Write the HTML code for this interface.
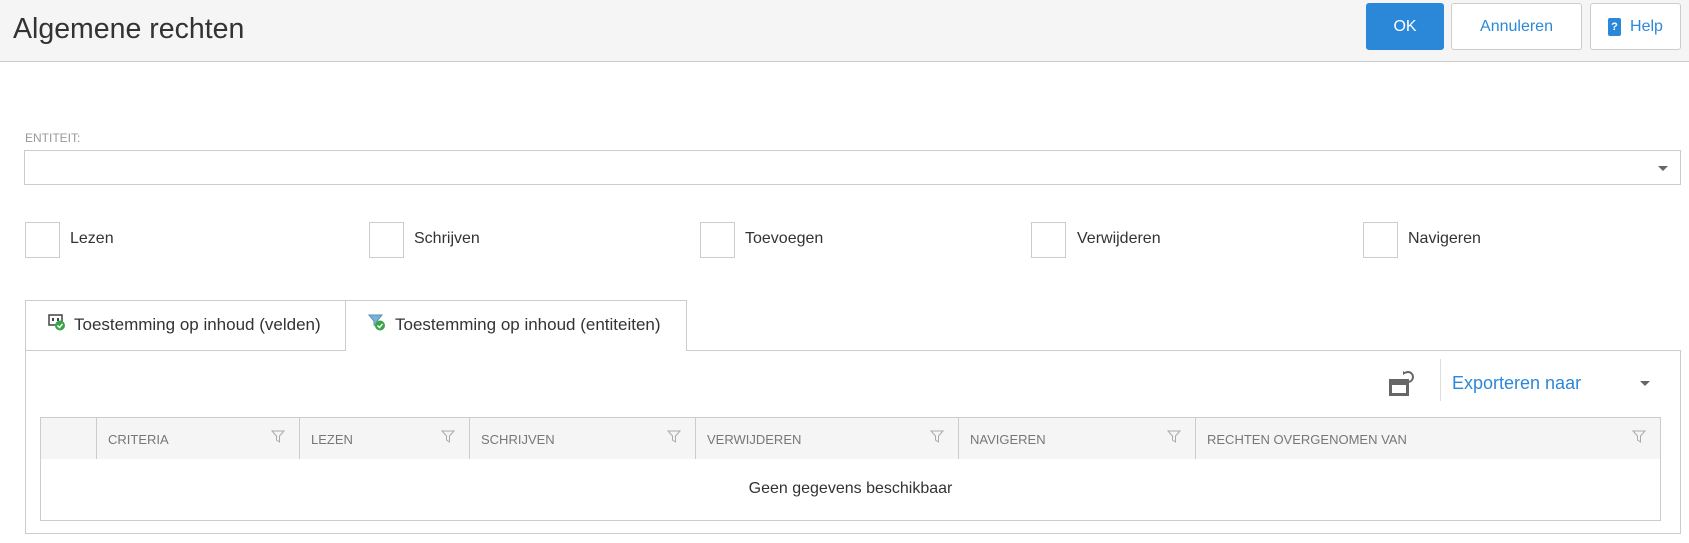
<!DOCTYPE html>
<html><head><meta charset="utf-8"><style>
*{box-sizing:border-box;margin:0;padding:0}
body{width:1689px;height:543px;background:#fff;font-family:"Liberation Sans",sans-serif;color:#333;position:relative;overflow:hidden}
.a{position:absolute}
.hdr{left:0;top:0;width:1689px;height:62px;background:#f5f5f5;border-bottom:1px solid #ccc}
.title{left:13px;top:13px;font-size:28.5px;color:#333}
.btn{top:3px;height:47px;border:1px solid #ccc;border-radius:3px;background:#fff;color:#2b88d8;font-size:16px;display:flex;align-items:center;justify-content:center}
.cb{width:35px;height:36px;border:1px solid #ccc;background:#fff;top:222px}
.cbl{top:230px;font-size:16px;color:#333}
.th{top:417px;height:42px;border-left:1px solid #ccc;font-size:13px;color:#777;padding:15px 0 0 11px}
.f{position:absolute;right:14px;top:13px}
</style></head><body>
<div class="a hdr"></div>
<div class="a title">Algemene rechten</div>
<div class="a btn" style="left:1366px;width:78px;background:#2b88d8;border-color:#2b88d8;color:#fff">OK</div>
<div class="a btn" style="left:1451px;width:131px">Annuleren</div>
<div class="a btn" style="left:1590px;width:91px"><span style="display:inline-block;width:13px;height:18px;background:#2b88d8;border-radius:2px;color:#fff;font-size:11px;text-align:center;line-height:18px;margin-right:9px;font-weight:bold">?</span>Help</div>

<div class="a" style="left:25px;top:131px;font-size:12px;color:#999">ENTITEIT:</div>
<div class="a" style="left:24px;top:150px;width:1657px;height:35px;border:1px solid #ccc"></div>
<div class="a" style="left:1658px;top:166px;width:0;height:0;border-left:5px solid transparent;border-right:5px solid transparent;border-top:5px solid #666"></div>

<div class="a cb" style="left:25px"></div><div class="a cbl" style="left:70px">Lezen</div>
<div class="a cb" style="left:369px"></div><div class="a cbl" style="left:414px">Schrijven</div>
<div class="a cb" style="left:700px"></div><div class="a cbl" style="left:745px">Toevoegen</div>
<div class="a cb" style="left:1031px"></div><div class="a cbl" style="left:1077px">Verwijderen</div>
<div class="a cb" style="left:1363px"></div><div class="a cbl" style="left:1408px">Navigeren</div>

<div class="a" style="left:25px;top:350px;width:1656px;height:184px;border:1px solid #ccc"></div>
<div class="a" style="left:25px;top:300px;width:321px;height:51px;border:1px solid #ccc;background:#fff"></div>
<div class="a" style="left:345px;top:300px;width:342px;height:51px;border:1px solid #ccc;border-bottom:none;background:#fff"></div>
<svg class="a" style="left:48px;top:313px" width="18" height="18" viewBox="0 0 18 18"><rect x="1" y="2" width="13" height="10" fill="#fff" stroke="#444" stroke-width="1.5"/><rect x="4" y="5" width="2" height="3" fill="#444"/><rect x="9" y="5" width="2" height="3" fill="#444"/><circle cx="12" cy="12.5" r="5" fill="#3aa544"/><path d="M9.5 12.5l2 2 3-3.5" stroke="#fff" stroke-width="1.5" fill="none"/></svg>
<div class="a" style="left:74px;top:315px;font-size:17px">Toestemming op inhoud (velden)</div>
<svg class="a" style="left:368px;top:313px" width="18" height="18" viewBox="0 0 18 18"><path d="M1 2h13l-5 6v6l-3-2V8z" fill="#7ab3d6" stroke="#5a8fb0"/><circle cx="12" cy="12.5" r="5" fill="#3aa544"/><path d="M9.5 12.5l2 2 3-3.5" stroke="#fff" stroke-width="1.5" fill="none"/></svg>
<div class="a" style="left:395px;top:315px;font-size:17px">Toestemming op inhoud (entiteiten)</div>

<svg class="a" style="left:1388px;top:370px" width="26" height="28" viewBox="0 0 26 28"><rect x="1" y="9" width="20" height="17" fill="#666"/><rect x="4" y="15" width="14" height="8" fill="#fff"/><path d="M17 11a5 5 0 1 0 0-8" stroke="#666" stroke-width="2" fill="none"/><path d="M15 1l3 2-3 2z" fill="#666"/></svg>
<div class="a" style="left:1440px;top:359px;width:1px;height:42px;background:#ddd"></div>
<div class="a" style="left:1452px;top:373px;font-size:18px;color:#2b88d8">Exporteren naar</div>
<div class="a" style="left:1640px;top:381px;width:0;height:0;border-left:5px solid transparent;border-right:5px solid transparent;border-top:5px solid #666"></div>

<div class="a" style="left:40px;top:417px;width:1621px;height:104px;border:1px solid #ccc"></div>
<div class="a" style="left:41px;top:418px;width:1619px;height:41px;background:#f5f5f5"></div>
<div class="a th" style="left:96px;width:203px">CRITERIA<svg class="f" width="14" height="13" viewBox="0 0 14 13"><path d="M1 1h12l-4.5 5v6l-3-2V6z" fill="none" stroke="#aaa"/></svg></div>
<div class="a th" style="left:299px;width:170px">LEZEN<svg class="f" width="14" height="13" viewBox="0 0 14 13"><path d="M1 1h12l-4.5 5v6l-3-2V6z" fill="none" stroke="#aaa"/></svg></div>
<div class="a th" style="left:469px;width:226px">SCHRIJVEN<svg class="f" width="14" height="13" viewBox="0 0 14 13"><path d="M1 1h12l-4.5 5v6l-3-2V6z" fill="none" stroke="#aaa"/></svg></div>
<div class="a th" style="left:695px;width:263px">VERWIJDEREN<svg class="f" width="14" height="13" viewBox="0 0 14 13"><path d="M1 1h12l-4.5 5v6l-3-2V6z" fill="none" stroke="#aaa"/></svg></div>
<div class="a th" style="left:958px;width:237px">NAVIGEREN<svg class="f" width="14" height="13" viewBox="0 0 14 13"><path d="M1 1h12l-4.5 5v6l-3-2V6z" fill="none" stroke="#aaa"/></svg></div>
<div class="a th" style="left:1195px;width:465px">RECHTEN OVERGENOMEN VAN<svg class="f" width="14" height="13" viewBox="0 0 14 13"><path d="M1 1h12l-4.5 5v6l-3-2V6z" fill="none" stroke="#aaa"/></svg></div>
<div class="a" style="left:41px;top:480px;width:1619px;text-align:center;font-size:16px">Geen gegevens beschikbaar</div>
</body></html>
